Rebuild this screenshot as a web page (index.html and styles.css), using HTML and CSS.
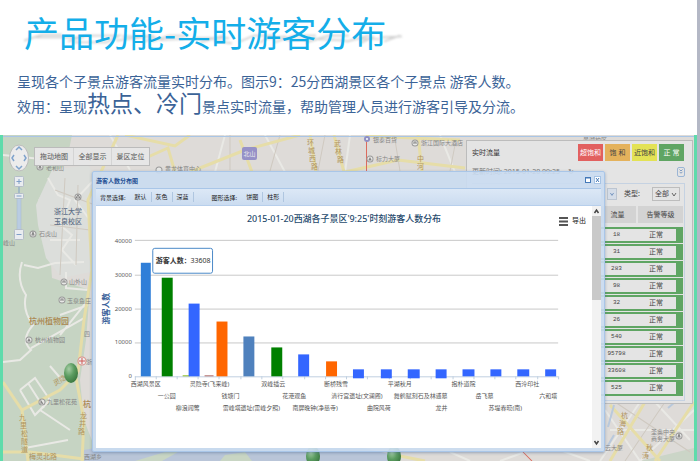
FILE: index.html
```html
<!DOCTYPE html>
<html lang="zh-CN">
<head>
<meta charset="utf-8">
<title>产品功能-实时游客分布</title>
<link rel="stylesheet" href="styles.css">
</head>
<body>
<header class="intro">
  <h1 class="title">
    <svg class="title-shade" viewBox="0 0 380 14" preserveAspectRatio="none" aria-hidden="true">
      <g stroke="#8d8d8d" stroke-width="2" fill="none">
        <path d="M0 9L18 2H38M12 5H60M44 10L62 3H95L82 11H50M92 9L130 3M98 4H128M118 11L132 5M128 10L145 3H165M136 8L160 7M170 6H205M176 11L200 3M190 9L208 12M216 10L230 3H248L236 11M240 7L262 4M250 11L270 3H292M262 8H284M282 11L305 3H325M290 7L322 9M322 10L345 3M335 7H356M336 12L350 4M358 5L378 4M360 10L376 3"/>
      </g>
    </svg>
    <span>产品功能-实时游客分布</span>
  </h1>
  <p class="lead">呈现各个子景点游客流量实时分布。图示9：25分西湖景区各个子景点 游客人数。</p>
  <p class="lead">效用：呈现<strong>热点、冷门</strong>景点实时流量，帮助管理人员进行游客引导及分流。</p>
</header>

<main class="stage">
  <svg class="map" viewBox="3 135 691 326" preserveAspectRatio="xMidYMid slice" aria-label="地图">
    <rect x="3" y="135" width="691" height="326" fill="#dedbd8"/>
    <path d="M3 135H72L66 165 55 172 38 200 42 225 50 250 52 278 90 290 86 340 80 380 84 420 100 461H3Z" fill="#c6d4c3"/>
    <path d="M52 170L88 165 100 182 100 270 62 278 46 258 38 225 36 205Z" fill="#dcdedb"/>
    <path d="M84 450L110 445H350L420 461H84Z" fill="#b9c5d8"/>
    <path d="M135 461L165 452H178L162 461ZM225 455L245 452 252 461H220Z" fill="#c8d5c3"/>
    <path d="M395 452H694V400H600V461H390Z" fill="#dedbd8"/>
    <path d="M640 461L694 448V461Z" fill="#cbd5c7"/>
    <g fill="none" stroke="#e9e9e5" stroke-width="2">
      <path d="M22 262Q16 280 26 295Q22 310 33 325Q20 340 31 350L20 360 3 362M24 265L38 268 55 263 84 262M66 272V288L88 290M60 315L88 305M31 348L84 318M20 390L35 378 50 400 35 415 20 390M28 383L44 408M50 366L62 380M88 300L60 335M48 178L58 195 70 200 60 225 72 235 62 250 76 265M92 182L75 200 90 220M50 240L80 240M3 155L50 160 90 150M110 135L130 170M225 135L215 172M265 135L285 172M350 135L345 172M440 135L455 172M40 410L70 430M25 448L68 440"/>
      <path d="M605 410L640 461M640 402L600 461M694 410L640 461M655 402L690 440M610 430L694 430M450 452L470 461M500 461L530 450M560 450L590 461"/>
    </g>
    <g fill="none" stroke="#cfc9c0" stroke-width="1">
      <path d="M55 190L95 205M65 178L60 275M78 185L76 265M50 225L90 230M230 135V170M280 135L270 171M325 135L318 171M395 140L400 171M455 145L450 171M615 402L690 452M625 461L665 402"/>
    </g>
    <g fill="none" stroke="#e6dda8" stroke-width="3">
      <path d="M118 135L88 200 92 270 84 320 78 372M78 372L60 390 22 410 3 382M22 410L28 461M76 378L84 420 82 461M3 452H30L84 459M130 165L168 148 175 172M125 135L175 146 190 135M190 172L245 150 300 135M240 140L252 172M310 135L316 172M334 135L344 172M418 135L422 172M345 172L398 160 465 168M366 136L460 140M610 461L645 402M610 405L628 425 660 461M694 402L655 461M395 455L425 461"/>
    </g>
    <path d="M366.500 140V172M523 452L532 461" stroke="#dc6b5e" fill="none"/>
    <path d="M608 427L614 405M668 408L675 402M607 447L614 435" stroke="#b9c9dc" stroke-width="2" fill="none"/>
    <path d="M3 136.500H694" stroke="#a9c5e5" fill="none"/>

    <g class="poi-marks" fill="#e8e8e6" stroke="#9a9a9a">
      <circle cx="40" cy="167" r="3"/><circle cx="78" cy="197" r="3"/><circle cx="33" cy="234" r="3"/>
      <circle cx="64" cy="282" r="3"/><circle cx="62" cy="300" r="3"/><circle cx="29" cy="340" r="3"/>
      <circle cx="42" cy="402" r="3"/><circle cx="159" cy="170" r="3"/><circle cx="370" cy="159" r="3"/>
      <circle cx="415" cy="143" r="3"/><circle cx="679" cy="436" r="3"/>
    </g>
    <path d="M40 165l-1 3h2zM76 198l2-3 2 3zM32 235l1-3 1 3zM63 283v-2h2v2M61 301v-2h2v2M28 341l1-2 1 2zM41 404v-3l2 3M369 160l1-2 1 2zM414 144v-2h2v2M678 437l1-3 1 3z" fill="none" stroke="#858585"/>
    <circle cx="367" cy="139" r="3" fill="#8f8fc4"/><circle cx="367" cy="139" r="1" fill="#fff"/>
    <circle cx="82" cy="361" r="4" fill="#eee" stroke="#d98d88"/><path d="M79 361h6M82 358v6" stroke="#cf5a57"/>

    <g class="map-text">
      <text x="46" y="170">老和山</text><text x="165" y="171">黄龙体育中心</text>
      <text x="39" y="236">石虎山</text><text x="3" y="245">峰山</text>
      <text x="69" y="284">山外山</text><text x="67" y="303">玉泉鱼庄</text>
      <text x="35" y="342">杭州植物园</text><text x="47" y="404">九里松花苑</text>
      <text x="84" y="459">西湖乡</text><text x="84" y="336">四</text><text x="86" y="364">浙</text>
      <text x="373" y="142">银泰百货</text><text x="376" y="161">标力大厦</text>
      <text x="421" y="145">浙江国际大酒店</text>
      <text x="651" y="434">圣奥中央</text><text x="651" y="441">商务大厦</text><text x="605" y="450">云大厦</text>
      <text x="583" y="142">景湖校区</text>
    </g>
    <g class="map-place"><text x="54" y="214">浙江大学</text><text x="54" y="224">玉泉校区</text></g>
    <g class="map-park"><text x="29" y="324">杭州植物园</text><text x="83" y="407">杭</text></g>
    <g class="map-road">
      <text x="55" y="386" transform="rotate(-30 55 386)">灵隐</text><text x="29" y="459">梅灵北路</text>
      <text x="19" y="420">九</text><text x="20" y="428">里</text><text x="21" y="436">松</text><text x="21" y="444">隧</text><text x="21" y="452">道</text>
      <text x="80" y="418">龙</text><text x="79" y="426">井</text><text x="78" y="434">路</text>
      <text x="307" y="145">环</text><text x="308" y="153">城</text><text x="309" y="161">西</text><text x="311" y="169">路</text>
      <text x="334" y="146">武</text><text x="335" y="154">林</text><text x="337" y="162">路</text>
      <text x="417" y="161">中</text><text x="417" y="169">河</text>
      <text x="621" y="418">杭</text><text x="619" y="426">海</text><text x="617" y="434">路</text>
      <text x="646" y="450">秋</text><text x="642" y="458">涛</text>
    </g>
    <rect x="242" y="147" width="15" height="13" rx="2" fill="#9691c7"/>
    <text class="map-badge" x="249.500" y="156">北山</text>

    <defs>
      <radialGradient id="ball" cx=".35" cy=".3" r=".75">
        <stop offset="0" stop-color="#a6cda5"/><stop offset=".5" stop-color="#5b9c60"/><stop offset="1" stop-color="#39773f"/>
      </radialGradient>
    </defs>
    <ellipse cx="71" cy="373" rx="7" ry="10" fill="url(#ball)"/>
    <ellipse cx="313" cy="456" rx="7" ry="10" fill="url(#ball)"/>
    <ellipse cx="394" cy="456" rx="7" ry="10" fill="url(#ball)"/>
  </svg>

  <svg class="navigator" viewBox="0 0 20 98" aria-label="地图缩放">
    <ellipse cx="10" cy="14" rx="9.500" ry="13" fill="#ececec" stroke="#bcbcbc"/>
    <path d="M7 6l3-3 3 3M7 22l3 3 3-3M5 11l-2 3 2 3M15 11l2 3-2 3" fill="none" stroke="#7fa3cc" stroke-width="1.500"/>
    <rect x="8" y="50" width="4" height="42" fill="#b9cce2" stroke="#a9b9cc" stroke-width=".5"/>
    <g fill="#e9ecf0" stroke="#b4bdc8"><rect x="5.500" y="32.500" width="9" height="10" rx="1"/><rect x="5.500" y="49.500" width="9" height="5" rx="1"/><rect x="5.500" y="85.500" width="9" height="10" rx="1"/></g>
    <path d="M7.500 37.500h5M10 35v5M7.500 52h5M7.500 90.500h5M10 43v6" stroke="#7f9fc8" fill="none"/>
  </svg>

  <nav class="map-tools">
    <button>拖动地图</button><button>全部显示</button><button>景区定位</button>
  </nav>

  <aside class="flow">
    <div class="flow-head">
      <h2>实时流量</h2>
      <span class="tag over">超饱和</span><span class="tag full">饱 和</span><span class="tag near">近饱和</span><span class="tag ok">正 常</span>
    </div>
    <div class="flow-time">
      <span>更新时间: 2015-01-20 09:25</span><span class="refresh">↻</span>
      <button class="fold" aria-label="收起"><svg viewBox="0 0 8 10"><path d="M2 2l2 2 2-2M2 5l2 2 2-2" fill="none" stroke="#5d83b5"/></svg></button>
    </div>
    <div class="flow-box">
      <div class="filters">
        <button class="combo" aria-label="景区"><svg viewBox="0 0 10 12"><path d="M3 5l2 3 2-3" fill="none" stroke="#5d83b5"/></svg></button>
        <label for="kind">类型:</label>
        <span class="pick"><select id="kind"><option>全部</option></select><svg viewBox="0 0 6 6" aria-hidden="true"><path d="M1 2l2 3 2-3" fill="none" stroke="#666"/></svg></span>
      </div>
      <table class="levels">
        <thead><tr><th class="c-name"></th><th class="c-num">流量</th><th class="c-level">告警等级</th></tr></thead>
        <tbody>
          <tr class="gap"></tr>
          <tr><td></td><td>18</td><td>正常</td></tr>
          <tr><td></td><td>31</td><td>正常</td></tr>
          <tr><td></td><td>283</td><td>正常</td></tr>
          <tr><td></td><td>98</td><td>正常</td></tr>
          <tr><td></td><td>32</td><td>正常</td></tr>
          <tr><td></td><td>26</td><td>正常</td></tr>
          <tr><td></td><td>540</td><td>正常</td></tr>
          <tr><td></td><td>95798</td><td>正常</td></tr>
          <tr><td></td><td>33608</td><td>正常</td></tr>
          <tr><td></td><td>525</td><td>正常</td></tr>
        </tbody>
      </table>
    </div>
  </aside>

  <section class="dialog">
    <div class="dialog-head">
      <h2>游客人数分布图</h2>
      <button aria-label="最大化"><svg viewBox="0 0 7 8"><rect x=".5" y="1.500" width="5" height="5" fill="#fff" stroke="#4479b8"/><path d="M0 2h6" stroke="#4479b8"/></svg></button>
      <button aria-label="关闭"><svg viewBox="0 0 7 8"><rect x=".5" y=".5" width="6" height="7" fill="#fff" stroke="#a6c3e4"/><path d="M2 2l3 4M5 2l-3 4" stroke="#4479b8"/></svg></button>
    </div>
    <div class="toolbar">
      <span>背景选择:</span><button>默认</button><button>灰色</button><button>深蓝</button>
      <span class="second">图形选择:</span><button>饼图</button><button>柱形</button>
    </div>
    <div class="dialog-body">
      <div class="chart-wrap">
        <svg class="chart" viewBox="95 206 498 243" role="img" aria-label="游客人数分布">
          <path d="M134 240.500H559M134 275.500H559M134 309.500H559M134 343.500H559" stroke="#c9c9c9"/>
          <path d="M134 377.500H559M134.500 377v4M155.500 377v3M176.500 377v3M197.500 377v3M218.500 377v3M240.500 377v3M261.500 377v3M282.500 377v3M304.500 377v3M325.500 377v3M346.500 377v3M367.500 377v3M389.500 377v3M410.500 377v3M431.500 377v3M453.500 377v3M474.500 377v3M495.500 377v3M516.500 377v3M538.500 377v3M559.500 377v3" stroke="#c0d0e0" fill="none"/>
          <rect x="140" y="263" width="10" height="114" fill="#2f7ed8"/>
          <rect x="161" y="278" width="11" height="99" fill="#008000"/>
          <rect x="182" y="376" width="7" height="1" fill="#8bbc21"/>
          <rect x="188" y="304" width="11" height="73" fill="#3366ff"/>
          <rect x="204" y="376" width="9" height="1" fill="#b06a68"/>
          <rect x="216" y="322" width="11" height="55" fill="#ff6600"/>
          <rect x="243" y="337" width="11" height="40" fill="#4f81bd"/>
          <rect x="271" y="348" width="11" height="29" fill="#008000"/>
          <rect x="298" y="355" width="11" height="22" fill="#3366ff"/>
          <rect x="326" y="362" width="11" height="15" fill="#ff6600"/>
          <g fill="#3366ff">
            <rect x="353" y="370" width="11" height="9"/><rect x="381" y="370" width="11" height="9"/>
            <rect x="408" y="370" width="12" height="9"/><rect x="436" y="370" width="11" height="9"/>
            <rect x="463" y="370" width="12" height="7"/><rect x="491" y="370" width="11" height="7"/>
            <rect x="518" y="370" width="12" height="7"/><rect x="546" y="370" width="11" height="7"/>
          </g>
          <text class="chart-title" x="344" y="222">2015-01-20西湖各子景区'9:25'时刻游客人数分布</text>
          <text class="axis-title" x="108" y="309" transform="rotate(-90 108 309)">游客人数</text>
          <g class="y-label">
            <text x="131" y="243">40000</text><text x="131" y="277">30000</text><text x="131" y="311">20000</text><text x="131" y="345">10000</text><text x="131" y="379">0</text>
          </g>
          <g class="x-label">
            <text x="145" y="387">西湖风景区</text><text x="209" y="387">灵隐寺(飞来峰)</text><text x="273" y="387">双峰插云</text><text x="336" y="387">断桥残雪</text><text x="400" y="387">平湖秋月</text><text x="464" y="387">抱朴道院</text><text x="528" y="387">西泠印社</text>
            <text x="166" y="399">一公园</text><text x="230" y="399">钱塘门</text><text x="294" y="399">花港观鱼</text><text x="357" y="399">清行宫遗址(文澜阁)</text><text x="421" y="399">舞鹤赋刻石及林逋墓</text><text x="485" y="399">岳飞墓</text><text x="549" y="399">六和塔</text>
            <text x="187" y="411">柳浪闻莺</text><text x="251" y="411">雷峰塔遗址(雷峰夕照)</text><text x="315" y="411">南屏晚钟(净慈寺)</text><text x="379" y="411">曲院风荷</text><text x="442" y="411">龙井</text><text x="506" y="411">苏堤春晓(南)</text>
          </g>
          <rect x="152" y="248.500" width="60" height="25" rx="2" fill="#fff" stroke="#4b89c8"/>
          <text class="tip" x="155" y="263"><tspan class="tip-name">游客人数：</tspan>33608</text>
        </svg>
        <button class="export"><svg viewBox="0 0 9 9" aria-hidden="true"><path d="M0 1h9M0 4.500h9M0 8h9" stroke="#555" stroke-width="2"/></svg>导出</button>
      </div>
      <div class="scroll" aria-hidden="true">
        <svg viewBox="0 0 9 10"><path d="M2.500 7l2-3 2 3" fill="none" stroke="#444" stroke-width="1.500"/></svg>
        <div class="thumb"></div>
        <svg viewBox="0 0 9 10"><path d="M2.500 3l2 3 2-3" fill="none" stroke="#444" stroke-width="1.500"/></svg>
      </div>
    </div>
  </section>
</main>
</body>
</html>
```
FILE: styles.css
```css
* { box-sizing: border-box; }

body {
  margin: 0;
  min-height: 100vh;
  display: flex;
  flex-direction: column;
  border-right: 3px solid #b4b8c6;
  background: #fff;
  color: #444;
  font-family: "Noto Sans", "Noto Sans CJK SC", sans-serif;
}

h1, h2, p { margin: 0; font-weight: 400; }
svg { display: block; }

button, select {
  margin: 0;
  padding: 0;
  border: 0;
  background: none;
  color: inherit;
  font: inherit;
}

/* Intro text */
.intro {
  height: 135px;
  padding: 7px 20px 0 17px;
  font-family: "Noto Sans CJK SC", sans-serif;
}

.title {
  position: relative;
  padding-left: 7px;
  margin-bottom: 12px;
  color: #14aee9;
  font-size: 35px;
  line-height: 50px;
}
.title span { position: relative; }
.title-shade {
  position: absolute;
  left: 7px;
  top: 26px;
  width: 380px;
  height: 12px;
  opacity: .4;
  filter: blur(1px);
}

.lead {
  color: #3b6397;
  font-size: 14px;
  line-height: 24px;
  white-space: nowrap;
}
.lead strong { font-size: 23px; font-weight: 400; line-height: 18px; }

/* Map area */
.stage {
  position: relative;
  flex: 1;
  overflow: hidden;
  border-left: 3px solid #5fdbab;
  border-right: 3px solid #5fdbab;
}
.map { position: absolute; inset: 0; width: 100%; height: 100%; }
.map text { font-size: 6px; }
.map-text { fill: #858585; }
.map .map-place text { font-size: 7px; fill: #5e6f87; font-weight: 500; }
.map .map-park text { font-size: 8px; fill: #aa854d; font-weight: 500; }
.map .map-road text { font-size: 7px; fill: #b0935c; }
.map .map-badge { fill: #eee; text-anchor: middle; }

.navigator { position: absolute; left: 6px; top: 9px; width: 20px; height: 98px; }

.map-tools {
  position: absolute;
  left: 31px;
  top: 12px;
  display: flex;
  height: 19px;
  border: 1px solid #bbb;
  background: #e6e6e6;
  color: #555;
  font-size: 7px;
  line-height: 17px;
}
.map-tools button { width: 38px; }
.map-tools button + button { border-left: 1px solid #d4d4d4; }

/* Flow panel */
.flow {
  position: absolute;
  top: 5px;
  right: 1px;
  width: 227px;
  padding: 3px 7px 2px 5px;
  border: 1px solid #bcbcbc;
  background: #e4e4e4;
  font-size: 7px;
  line-height: 12px;
}
.flow-head { display: flex; gap: 2px; align-items: center; padding-right: 1px; }
.flow-head h2 { flex: 1; font-size: 7px; color: #333; }
.tag { width: 25px; text-align: center; line-height: 17px; }
.over { background: #e2605f; color: #fff; }
.full { background: #e4b25c; }
.near { background: #e3e255; }
.ok { background: #5fa563; color: #fff; }

.flow-time { display: flex; align-items: center; gap: 8px; height: 22px; color: #777; }
.refresh { flex: 1; }
.fold { width: 8px; height: 10px; border: 1px solid #9bb5d5; border-radius: 2px; }

.flow-box { padding: 3px 1px 3px 0; border: 1px solid #c5d2e2; border-left: 0; }
.filters { display: flex; justify-content: flex-end; align-items: center; height: 14px; gap: 7px; padding-right: 3px; margin-bottom: 4px; }
.combo { width: 10px; height: 12px; background: #d5dde8; border: 1px solid #bcc5d1; }
.pick { position: relative; margin-left: 5px; }
.pick select { appearance: none; display: block; width: 28px; height: 14px; padding-left: 2px; border: 1px solid #bdbdbd; line-height: 12px; }
.pick svg { position: absolute; right: 3px; top: 4px; width: 6px; height: 6px; }

.levels { width: 100%; table-layout: fixed; border-collapse: separate; border-spacing: 0 1px; text-align: center; }
.levels th, .levels td { padding: 0; font-weight: 400; }
.levels th { height: 17px; background: #d3d3d3; }
.levels .gap { height: 2px; }
.levels thead th + th { border-left: 2px solid #e4e4e4; }
.levels td { height: 16px; line-height: 12px; border: solid #5fa563; border-width: 2px 0; }
.levels td:nth-child(2) { font-size: 6px; font-family: "Liberation Mono", monospace; }
.levels td:last-child { border-right-width: 7px; }
.c-num { width: 39px; }
.c-level { width: 47px; }

/* Dialog */
.dialog {
  position: relative;
  margin: 36px 89px 9px 89px;
  padding: 0 3px 3px;
  border: 1px solid #a9c6e8;
  border-radius: 2px;
  background: rgba(202, 220, 241, .9);
  box-shadow: 0 1px 3px rgba(80, 110, 150, .5);
}
.dialog-head { display: flex; align-items: center; gap: 2px; height: 16px; }
.dialog-head h2 { flex: 1; color: #1f4f94; font-size: 6px; font-weight: 700; }
.dialog-head svg { width: 7px; height: 8px; }

.toolbar {
  display: flex;
  align-items: center;
  height: 18px;
  padding-left: 4px;
  border-top: 1px solid #a9c6e8;
  border-bottom: 1px solid #b7cfec;
  background: linear-gradient(#dce8f6, #cbdcf0);
  color: #222;
  font-size: 6px;
}
.toolbar button { width: 21px; line-height: 10px; border-right: 1px solid #afc6e0; }
.toolbar span + button { margin-left: 5px; }
.toolbar .second { margin-left: 18px; }

.dialog-body { display: flex; background: #fff; }
.chart-wrap { position: relative; flex: 1; }
.chart { width: 100%; }
.chart-title { font-size: 9px; font-weight: 500; fill: #274b6d; text-anchor: middle; }
.axis-title { font-size: 8px; font-weight: 700; fill: #3b639b; text-anchor: middle; }
.y-label { font-size: 6px; fill: #555; text-anchor: end; }
.x-label { font-size: 6px; fill: #555; text-anchor: middle; }
.tip { font-size: 7px; fill: #333; }
.tip-name { font-weight: 700; }

.export {
  position: absolute;
  top: 9px;
  right: 6px;
  display: flex;
  align-items: center;
  gap: 4px;
  color: #222;
  font-size: 7px;
  line-height: 12px;
}
.export svg { width: 9px; height: 9px; }

.scroll { width: 9px; display: flex; flex-direction: column; background: #f2f2f2; }
.scroll svg { width: 9px; height: 10px; }
.thumb { height: 84px; margin-bottom: auto; background: #c9c9c9; }
```
